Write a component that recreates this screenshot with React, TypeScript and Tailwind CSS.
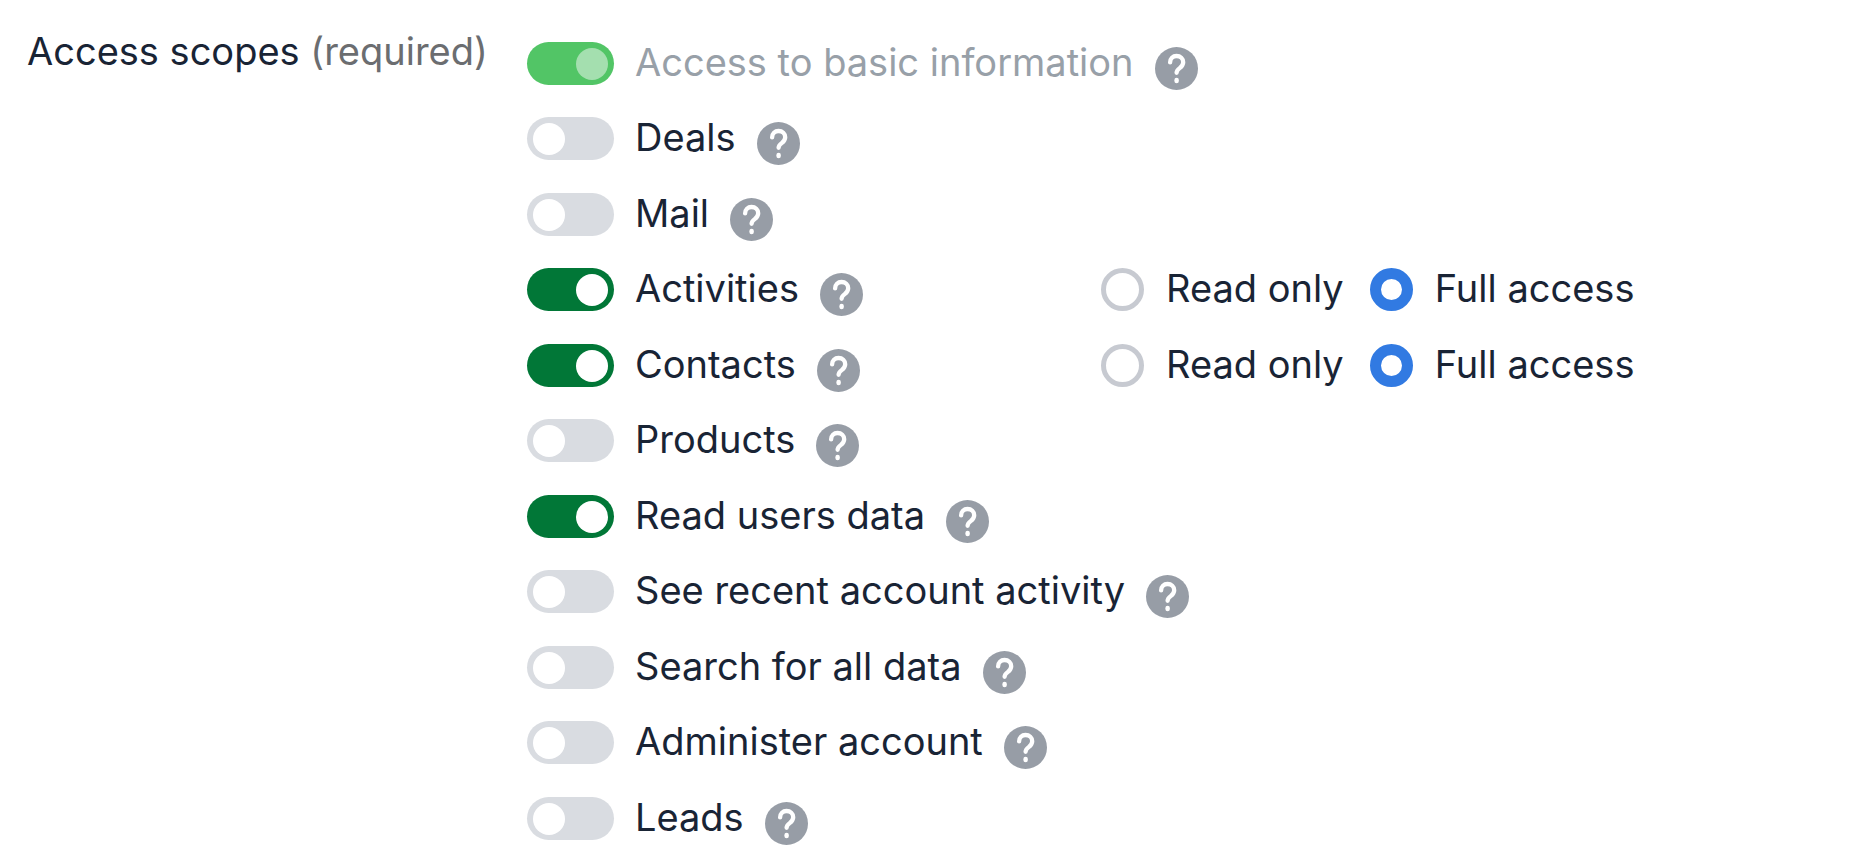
import { useState } from "react";

type TAccess = "read" | "full";

type TScope = {
  id: string;
  label: string;
  enabled: boolean;
  locked?: boolean;
  access?: TAccess;
};

const initialScopes: TScope[] = [
  { id: "base", label: "Access to basic information", enabled: true, locked: true },
  { id: "deals", label: "Deals", enabled: false },
  { id: "mail", label: "Mail", enabled: false },
  { id: "activities", label: "Activities", enabled: true, access: "full" },
  { id: "contacts", label: "Contacts", enabled: true, access: "full" },
  { id: "products", label: "Products", enabled: false },
  { id: "users", label: "Read users data", enabled: true },
  { id: "recents", label: "See recent account activity", enabled: false },
  { id: "search", label: "Search for all data", enabled: false },
  { id: "admin", label: "Administer account", enabled: false },
  { id: "leads", label: "Leads", enabled: false },
];

const HelpButton = ({ label }: { label: string }) => (
  <button type="button" aria-label={`About ${label}`} className="mt-[5px] ml-[21px] shrink-0">
    <svg viewBox="0 0 43 43" className="block size-[43px]" fill="none">
      <circle cx="21.5" cy="21.5" r="21.5" fill="#979da6" />
      <path
        d="M15.100 15.400c0-3.800 2.800-6.400 6.400-6.400 3.900 0 6.700 2.700 6.700 6.200 0 2.900-1.500 4.400-3.500 5.900-2 1.500-3.100 2.700-3.100 4.700"
        stroke="white"
        strokeWidth="4.300"
        strokeLinecap="round"
      />
      <path d="M21.600 33.100v1" stroke="white" strokeWidth="4.500" strokeLinecap="round" />
    </svg>
  </button>
);

const AccessRadio = ({
  scopeId,
  label,
  checked,
  onSelect,
}: {
  scopeId: string;
  label: string;
  checked: boolean;
  onSelect: () => void;
}) => (
  <label className="flex items-start gap-[22px] whitespace-nowrap">
    <input
      type="radio"
      name={`${scopeId}-access`}
      checked={checked}
      onChange={onSelect}
      className="size-[43px] shrink-0 appearance-none rounded-full border-[5px] border-[#c7cad1] bg-white checked:border-[11px] checked:border-[#317ae2]"
    />
    {label}
  </label>
);

const App = () => {
  const [scopes, setScopes] = useState(initialScopes);

  const updateScope = (id: string, changes: Partial<TScope>) => {
    setScopes(scopes.map((scope) => (scope.id === id ? { ...scope, ...changes } : scope)));
  };

  return (
    <form className="flex items-start bg-white pl-[27px] font-['Inter',sans-serif] text-[38px] leading-10 text-[#192435]">
      <h2 id="scopes-title" className="mt-[31px] w-[500px] shrink-0 whitespace-nowrap">
        Access scopes <span className="text-[#6b6d70]">(required)</span>
      </h2>
      <ul aria-labelledby="scopes-title" className="min-w-0 flex-1 pt-[42px]">
        {scopes.map((scope) => (
          <li key={scope.id} className="flex items-start odd:h-[75px] even:h-[76px] last:h-12">
            <div className="flex w-[574px] shrink-0 items-start">
              <label className="flex items-start gap-[21px] whitespace-nowrap">
                <input
                  type="checkbox"
                  role="switch"
                  checked={scope.enabled}
                  disabled={scope.locked}
                  onChange={(e) => updateScope(scope.id, { enabled: e.target.checked })}
                  className="flex h-[43px] w-[87px] shrink-0 appearance-none items-center rounded-full bg-[#d9dce1] px-[6px] before:size-8 before:rounded-full before:bg-white checked:justify-end checked:bg-[#017737] disabled:bg-[#52c566] disabled:before:bg-[#a4dfaf]"
                />
                <span className={scope.locked ? "text-[#98a0a8]" : ""}>{scope.label}</span>
              </label>
              <HelpButton label={scope.label} />
            </div>
            {scope.access && (
              <div className="flex gap-[26px]">
                <AccessRadio
                  scopeId={scope.id}
                  label="Read only"
                  checked={scope.access === "read"}
                  onSelect={() => updateScope(scope.id, { access: "read" })}
                />
                <AccessRadio
                  scopeId={scope.id}
                  label="Full access"
                  checked={scope.access === "full"}
                  onSelect={() => updateScope(scope.id, { access: "full" })}
                />
              </div>
            )}
          </li>
        ))}
      </ul>
    </form>
  );
};

export default App;
